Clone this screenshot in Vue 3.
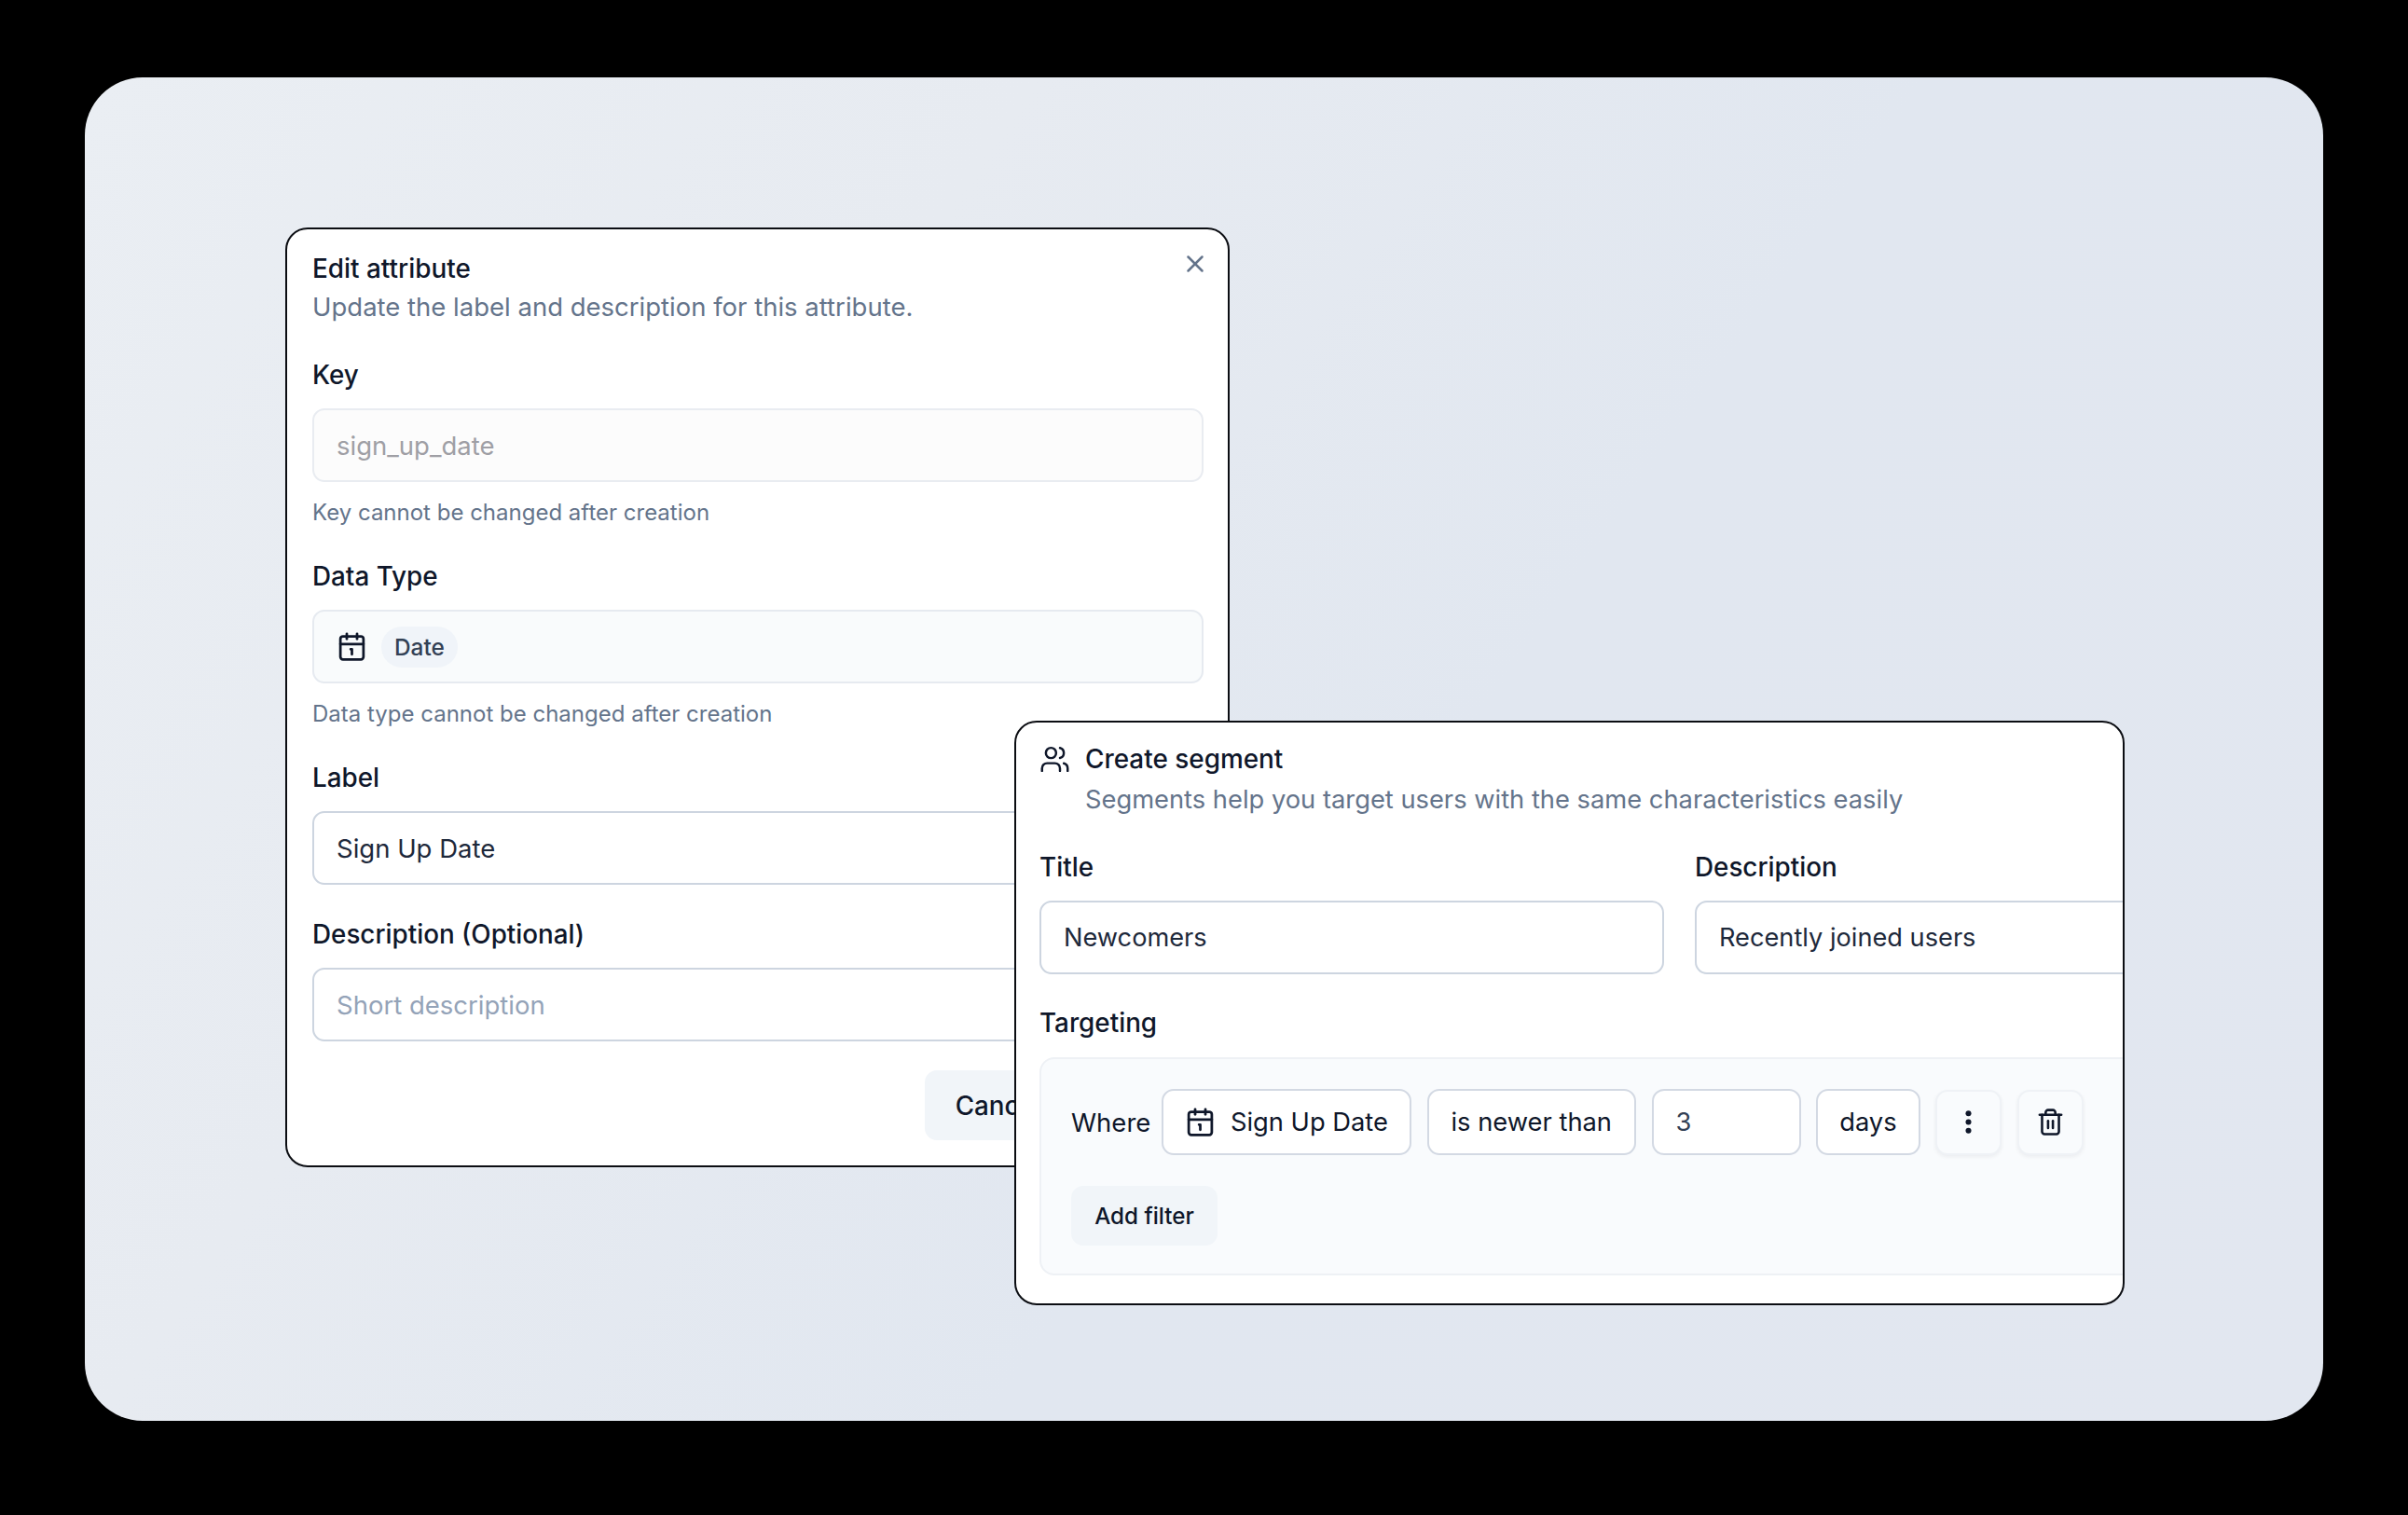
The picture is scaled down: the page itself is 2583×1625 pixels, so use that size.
<script setup>
const rowGroups = [
  { label: 'Key', value: 'sign_up_date', cls: 'locked-key', hint: 'Key cannot be changed after creation' },
]
</script>

<template>
  <div class="page">
    <main class="canvas">
      <section class="modal edit">
        <header class="edit-head">
          <h2 class="title">Edit attribute</h2>
          <p class="sub">Update the label and description for this attribute.</p>
          <svg class="close" viewBox="0 0 24 24" fill="none" stroke="currentColor" stroke-width="2" stroke-linecap="round" stroke-linejoin="round"><path d="M18 6 6 18" /><path d="m6 6 12 12" /></svg>
        </header>

        <div v-for="g in rowGroups" :key="g.label" class="group first">
          <label class="label">{{ g.label }}</label>
          <div class="field" :class="g.cls">{{ g.value }}</div>
          <p class="hint">{{ g.hint }}</p>
        </div>

        <div class="group">
          <label class="label">Data Type</label>
          <div class="field locked-type">
            <svg class="icon cal" viewBox="0 0 24 24" fill="none" stroke="currentColor" stroke-width="2" stroke-linecap="round" stroke-linejoin="round"><path d="M11 14h1v4" /><path d="M16 2v4" /><path d="M3 10h18" /><path d="M8 2v4" /><rect x="3" y="4" width="18" height="18" rx="2" /></svg>
            <span class="pill">Date</span>
          </div>
          <p class="hint">Data type cannot be changed after creation</p>
        </div>

        <div class="group">
          <label class="label">Label</label>
          <div class="field">Sign Up Date</div>
        </div>

        <div class="group">
          <label class="label">Description (Optional)</label>
          <div class="field placeholder">Short description</div>
        </div>

        <footer class="actions">
          <button class="btn cancel">Cancel</button>
          <button class="btn save">Save</button>
        </footer>
      </section>

      <section class="modal segment">
        <div class="segment-inner">
          <header class="seg-head">
            <svg class="icon users" viewBox="0 0 24 24" fill="none" stroke="currentColor" stroke-width="1.8" stroke-linecap="round" stroke-linejoin="round"><path d="M16 21v-2a4 4 0 0 0-4-4H6a4 4 0 0 0-4 4v2" /><path d="M16 3.128a4 4 0 0 1 0 7.744" /><path d="M22 21v-2a4 4 0 0 0-3-3.87" /><circle cx="9" cy="7" r="4" /></svg>
            <div>
              <h2 class="title">Create segment</h2>
              <p class="sub seg-sub">Segments help you target users with the same characteristics easily</p>
            </div>
          </header>

          <div class="two-col">
            <div class="group">
              <label class="label">Title</label>
              <div class="field seg-field">Newcomers</div>
            </div>
            <div class="group">
              <label class="label">Description</label>
              <div class="field seg-field">Recently joined users</div>
            </div>
          </div>

          <label class="label targeting">Targeting</label>
          <div class="filter-panel">
            <div class="filter-row">
              <span class="where">Where</span>
              <div class="chip attr">
                <svg class="icon cal" viewBox="0 0 24 24" fill="none" stroke="currentColor" stroke-width="2" stroke-linecap="round" stroke-linejoin="round"><path d="M11 14h1v4" /><path d="M16 2v4" /><path d="M3 10h18" /><path d="M8 2v4" /><rect x="3" y="4" width="18" height="18" rx="2" /></svg>
                <span>Sign Up Date</span>
              </div>
              <div class="chip">is newer than</div>
              <div class="chip number">3</div>
              <div class="chip days">days</div>
              <button class="square">
                <svg class="icon kebab" viewBox="0 0 24 24" fill="currentColor"><circle cx="12" cy="5.3" r="2.2" /><circle cx="12" cy="12" r="2.2" /><circle cx="12" cy="18.7" r="2.2" /></svg>
              </button>
              <button class="square">
                <svg class="icon trash" viewBox="0 0 24 24" fill="none" stroke="currentColor" stroke-width="2" stroke-linecap="round" stroke-linejoin="round"><path d="M3 6h18" /><path d="M19 6v14c0 1-1 2-2 2H7c-1 0-2-1-2-2V6" /><path d="M8 6V4c0-1 1-2 2-2h4c1 0 2 1 2 2v2" /><path d="M10 11v6" /><path d="M14 11v6" /></svg>
              </button>
            </div>
            <button class="btn add">Add filter</button>
          </div>
        </div>
      </section>
    </main>
  </div>
</template>

<style>
html, body { margin: 0; background: #000; }
</style>

<style scoped>
* { box-sizing: border-box; }
.page {
  width: 2583px;
  height: 1625px;
  padding: 83px 91px 101px;
  background: #000;
  font-family: Inter, "Liberation Sans", sans-serif;
  color: #0f172a;
  overflow: hidden;
}
.canvas {
  position: relative;
  width: 100%;
  height: 100%;
  border-radius: 62px;
  background: linear-gradient(125deg, #eaeef3 0%, #e7ebf1 30%, #e1e7f0 58%, #e2e7f0 100%);
}
.modal {
  position: absolute;
  background: #fff;
  border: 2px solid #0b0d12;
  border-radius: 24px;
}
.edit {
  left: 215px;
  top: 161px;
  width: 1013px;
  height: 1008px;
  padding: 25px 26px 0 27px;
}
.edit-head { position: relative; }
.title {
  margin: 0;
  font-size: 27.9px;
  line-height: 34px;
  font-weight: 500;
  color: #0f172a;
}
.sub {
  margin: 4px 0 0;
  font-size: 27.5px;
  line-height: 40px;
  color: #64748b;
}
.close {
  position: absolute;
  right: -6px;
  top: -3px;
  width: 30px;
  height: 30px;
  color: #64748b;
}
.group {
  display: flex;
  flex-direction: column;
  margin-top: 36px;
}
.group.first { margin-top: 36px; }
.label {
  font-size: 27.8px;
  line-height: 34px;
  font-weight: 500;
  color: #0f172a;
}
.field {
  display: flex;
  align-items: center;
  height: 79px;
  margin-top: 19px;
  padding: 0 24px;
  border: 2px solid #cdd5e0;
  border-radius: 13px;
  background: #fff;
  font-size: 27.5px;
  color: #1e293b;
  white-space: nowrap;
}
.seg-field { font-size: 27.2px; }
.locked-key {
  background: #fcfcfc;
  border-color: #e9ecf1;
  color: #9f9fa5;
}
.locked-type {
  background: #f9fbfc;
  border-color: #e6eaf0;
  gap: 15px;
}
.placeholder { color: #94a3b8; }
.hint {
  margin: 18px 0 0;
  font-size: 24px;
  line-height: 30px;
  color: #64748b;
}
.icon { flex: none; display: block; }
.cal { width: 33px; height: 33px; color: #0f172a; }
.pill {
  display: flex;
  align-items: center;
  height: 44px;
  padding: 0 14px;
  border-radius: 22px;
  background: #f0f4f9;
  font-size: 24.4px;
  font-weight: 500;
  color: #334155;
}
.actions {
  display: flex;
  justify-content: flex-end;
  gap: 16px;
  margin-top: 31px;
}
.btn {
  border: none;
  border-radius: 13px;
  background: #f1f5f9;
  font-family: inherit;
  font-weight: 500;
  color: #0f172a;
}
.cancel, .save {
  height: 75px;
  padding: 0 33px;
  font-size: 27.8px;
}
.save { background: #0f172a; color: #fff; padding: 0 30px; }

.segment {
  left: 997px;
  top: 690px;
  width: 1191px;
  height: 627px;
  overflow: hidden;
}
.segment-inner {
  padding: 22px 0 0 25px;
  width: 1396px;
}
.seg-head {
  display: flex;
  gap: 16px;
}
.users { width: 33px; height: 33px; margin-top: 1px; color: #0f172a; }
.seg-sub { margin-top: 7px; font-size: 27.3px; }
.two-col {
  display: grid;
  grid-template-columns: 670px 668px;
  gap: 33px;
  margin-top: -1px;
}
.two-col .group { margin-top: 36px; }
.targeting { display: block; margin-top: 35px; }
.filter-panel {
  margin-top: 20px;
  height: 234px;
  padding: 32px 32px 0;
  background: #f9fbfd;
  border: 2px solid #eef1f5;
  border-radius: 16px;
}
.filter-row {
  display: flex;
  align-items: center;
  gap: 16.6px;
}
.where { font-size: 27.5px; margin-right: -5px; color: #0f172a; }
.chip {
  display: flex;
  align-items: center;
  gap: 16px;
  height: 71px;
  padding: 0 24px;
  background: #fff;
  border: 2px solid #d3d9e3;
  border-radius: 13px;
  font-size: 27.3px;
  color: #0f172a;
  white-space: nowrap;
}
.attr { padding: 0 23px; }
.days { padding: 0 23px; }
.number { width: 160px; color: #334155; }
.square {
  display: flex;
  align-items: center;
  justify-content: center;
  width: 71px;
  height: 70px;
  padding: 0;
  background: #f9fbfd;
  border: 2px solid #eff2f6;
  border-radius: 13px;
  box-shadow: 0 2px 4px rgba(15, 23, 42, 0.06);
  color: #0f172a;
}
.kebab { width: 33px; height: 33px; }
.trash { width: 31px; height: 31px; }
.add {
  display: block;
  margin-top: 33px;
  width: 157px;
  height: 64px;
  font-size: 24.2px;
}
</style>
